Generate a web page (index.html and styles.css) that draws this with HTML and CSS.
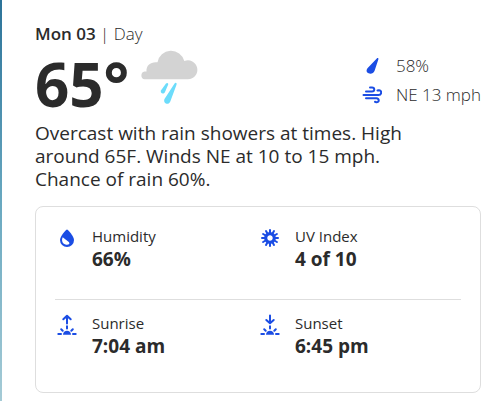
FILE: index.html
```html
<!DOCTYPE html>
<html lang="en">
<head>
  <meta charset="UTF-8" />
  <meta name="viewport" content="width=device-width, initial-scale=1.0" />
  <title>Daily Forecast</title>
  <link rel="stylesheet" href="styles.css">
</head>
<body>
  <main class="forecast">
    <h2 class="day-title"><span class="day-date">Mon 03</span> | Day</h2>
    <div class="summary">
      <span class="temp">65°</span>
      <svg class="weather-icon" viewBox="0 0 58 56" aria-hidden="true">
        <path fill="#d3d3d3" d="M4.500 30.300A4 4 0 0 1 4.500 22.500H6.500C6 16 11 12.500 17.500 13.300A13.700 13.700 0 0 1 44.300 12A9.500 9.500 0 1 1 48 30.300Z"/>
        <path fill="#6cdcfb" d="M34.400 34.800C35.300 33 37.200 33.800 36.500 35.700L30.300 52.500C28.500 57 22.700 54.300 24.500 50Z"/>
        <path fill="#6cdcfb" d="M26 34.600C27.200 33.200 28.700 34.200 28.100 35.800L25 43C23.500 46.200 19.500 44 21.100 41.300Z"/>
      </svg>
      <ul class="stats">
        <li>
          <svg class="stat-icon" viewBox="0 0 20 20" aria-hidden="true">
            <path fill="#1b4de4" d="M14.800 2.500C15.500 1.600 16.700 2.200 16.400 3.300L12.600 14.800C11 19.600 3.200 18 4.800 13.600C5 13 5.200 12.600 5.700 12.100Z"/>
          </svg>
          <span>58%</span>
        </li>
        <li>
          <svg class="stat-icon line" viewBox="0 0 20 20" aria-hidden="true">
            <path d="M4 6.500H10C13 6.500 13 2.500 10 2.500H8M1.500 10H16.500C20 10 20 5 16.800 5.200L15.500 5.500M4 13.300H14.500C17.500 13.300 17.500 17.500 14.300 17.200L13 16.800"/>
          </svg>
          <span>NE 13 mph</span>
        </li>
      </ul>
    </div>
    <p class="description">Overcast with rain showers at times. High around 65F. Winds NE at 10 to 15 mph. Chance of rain 60%.</p>
    <div class="details">
      <div class="details-row">
        <div class="detail">
          <svg class="detail-icon" viewBox="0 0 20 24" aria-hidden="true">
            <path fill="#1b4de4" d="M10 3.500C10.700 3.500 17 10.200 17 14A7 7 0 0 1 3 14C3 10.200 9.300 3.500 10 3.500Z"/>
            <path fill="#fff" d="M5.700 11.300C4.200 14.300 5.300 18.200 9.200 18.700C12 19 13.200 17.500 11.800 15.900Z"/>
          </svg>
          <div>
            <div class="label">Humidity</div>
            <div class="value">66%</div>
          </div>
        </div>
        <div class="detail">
          <svg class="detail-icon line" viewBox="0 0 20 24" aria-hidden="true">
            <circle cx="10" cy="12" r="4.300" stroke-width="3.200"/>
            <path d="M10 4V8M10 16V20M2 12H6M14 12H18M6 5.100L8 8.500M12 15.500L14 18.900M3.100 8L6.500 10M13.500 14L16.900 16M3.100 16L6.500 14M13.500 10L16.900 8M6 18.900L8 15.500M12 8.500L14 5.100"/>
          </svg>
          <div>
            <div class="label">UV Index</div>
            <div class="value">4 of 10</div>
          </div>
        </div>
      </div>
      <div class="details-row">
        <div class="detail">
          <svg class="detail-icon line" viewBox="0 0 20 24" aria-hidden="true">
            <path d="M10 10.500V3M6.300 6.200L10 2.700L13.700 6.200M10 13.200V15.500M4.200 16.200L5.700 17.700M15.800 16.200L14.300 17.700M1.300 21H4M16 21H18.700"/>
            <path class="solid" d="M6 21.800C6 16.500 14 16.500 14 21.800Z"/>
          </svg>
          <div>
            <div class="label">Sunrise</div>
            <div class="value">7:04 am</div>
          </div>
        </div>
        <div class="detail">
          <svg class="detail-icon line" viewBox="0 0 20 24" aria-hidden="true">
            <path d="M10 2.500V10M6.300 7L10 10.300L13.700 7M10 13.200V15.500M4.200 16.200L5.700 17.700M15.800 16.200L14.300 17.700M1.300 21H4M16 21H18.700"/>
            <path class="solid" d="M6 21.800C6 16.500 14 16.500 14 21.800Z"/>
          </svg>
          <div>
            <div class="label">Sunset</div>
            <div class="value">6:45 pm</div>
          </div>
        </div>
      </div>
    </div>
  </main>
</body>
</html>
```
FILE: styles.css
```css
* {
  box-sizing: border-box;
}
body {
  margin: 0;
  padding-left: 2px;
  font-family: "Open Sans", "Noto Sans", sans-serif;
  color: #2b2b2b;
  background: linear-gradient(to bottom, #2c7399, #68a8c0 50%, #a5cbd6);
}
.forecast {
  background: #fff;
  padding: 22px 16px 8px 33px;
}
.day-title {
  margin: 0;
  font-size: 17px;
  line-height: 24px;
  font-weight: 300;
}
.day-date {
  font-weight: 600;
}
.summary {
  display: flex;
  align-items: flex-start;
  height: 76px;
}
.temp {
  font-size: 60px;
  line-height: 76px;
  font-weight: 700;
}
.weather-icon {
  width: 58px;
  height: 56px;
  margin: 3px 0 0 11px;
  overflow: visible;
}
.stats {
  list-style: none;
  margin: 5px 0 0 auto;
  padding: 0;
  font-size: 17px;
  line-height: 29px;
  font-weight: 300;
}
.stats li {
  display: flex;
  align-items: center;
  gap: 14px;
}
.stat-icon {
  width: 20px;
  height: 20px;
}
.line {
  fill: none;
  stroke: #1b4de4;
  stroke-width: 2;
  stroke-linecap: round;
  stroke-linejoin: round;
}
.solid {
  fill: #1b4de4;
  stroke: none;
}
.description {
  margin: 0;
  max-width: 380px;
  font-size: 19px;
  line-height: 23px;
}
.details {
  margin-top: 15px;
  padding: 0 19px;
  border: 1px solid #dedede;
  border-radius: 8px;
}
.details-row {
  display: grid;
  grid-template-columns: 1fr 1fr;
  padding: 19px 0 28px;
}
.details-row + .details-row {
  border-top: 1px solid #dedede;
  padding: 13px 0 34px;
}
.detail {
  display: flex;
  align-items: flex-start;
  gap: 15px;
  padding-left: 2px;
}
.detail-icon {
  width: 20px;
  height: 24px;
}
.label {
  font-size: 15px;
  line-height: 21px;
}
.value {
  font-size: 19px;
  line-height: 24px;
  font-weight: 700;
}
```
